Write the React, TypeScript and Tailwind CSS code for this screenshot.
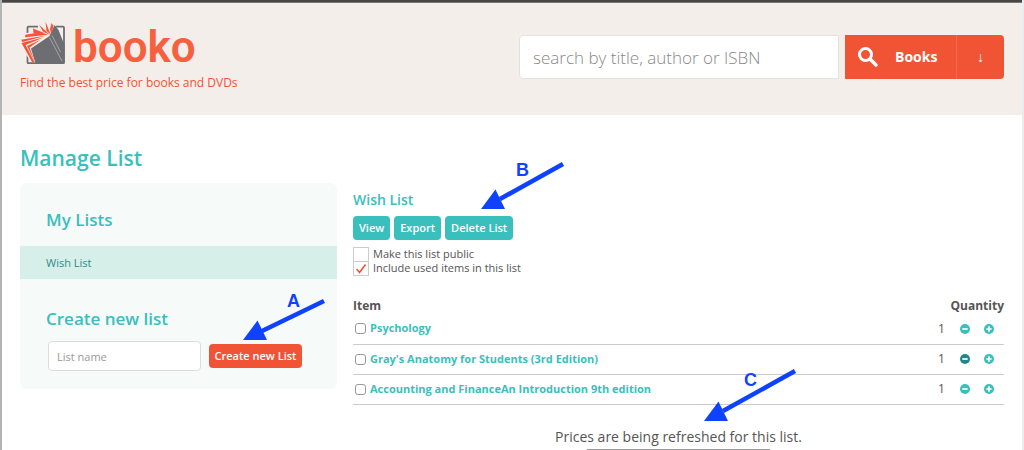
import React, { FC, ReactNode, useState } from "react";
import clsx from "clsx";

interface Book {
  title: string
  quantity: number
  hovered?: boolean
}

const books: Book[] = [
  { title: "Psychology", quantity: 1 },
  { title: "Gray's Anatomy for Students (3rd Edition)", quantity: 1, hovered: true },
  { title: "Accounting and FinanceAn Introduction 9th edition", quantity: 1 },
]

const Logo: FC = () => (
  <svg viewBox="0 0 46 46" className="h-[46px] w-[46px]" aria-hidden="true">
    <rect x="7.500" y="7.700" width="36.500" height="36.500" rx="1" fill="none" stroke="#6d6e71" strokeWidth="1.800" />
    {/* gap around the open pages */}
    <path d="M0 19 L5 14.500 L9 13.500 L12 9 L18 9 V5 H37 L30 18 L12 31 L16.500 43 H11 L5 34 Z" fill="#f3eee9" />
    <path d="M34.500 6 L38.500 11 L44.500 26 V44.500 H15.500 L11 29.500 L29.500 17 Z" fill="#6d6e71" />
    <path d="M29.500 18.500 L42 42 M32 16.500 L40.500 33" stroke="#c9c6c4" strokeWidth=".6" fill="none" />
    {/* pages */}
    <g fill="#f4553a">
      <path d="M13 9.500 L25.500 14.500 L13.500 14 Z" />
      <path d="M19 5.500 L30 16 L23 12.500 Z" />
      <path d="M25.500 2.500 L30.500 15.500 L26.500 12 Z" />
      <path d="M31.500 4 L33.500 7 L31 15.500 L30 10 Z" />
      <path d="M5.500 15.700 L20 13.300 L28 15.800 L5 18.200 Z" />
      <path d="M1 20.700 L27.500 16.300 L2.500 23 Z" />
      <path d="M1.500 24 L24 18.300 L5.500 26 L14.500 43 L12 43 Z" />
      <path d="M7 27 L21 20.500 L9.500 28.500 L15 43 Z" />
    </g>
  </svg>
)

interface MarkerProps {
  letter: string
  className: string
}

const Marker: FC<MarkerProps> = ({ letter, className }) => (
  <div className={clsx("pointer-events-none absolute h-[50px] w-[92px]", className)}>
    <svg viewBox="0 0 92 50" className="h-full w-full overflow-visible" fill="#0f42ff" stroke="#0f42ff" aria-hidden="true">
      {letter === "A" ? (
        <path d="M19 36 L81 6" strokeWidth="4.500" />
      ) : letter === "B" ? (
        <path d="M19 35 L82 0" strokeWidth="4.500" />
      ) : (
        <path d="M19 35 L91 -5" strokeWidth="4.500" />
      )}
      <path d="M0 45 L14.500 25.500 L24 45 Z" stroke="none" />
    </svg>
  </div>
)

const Letter: FC<{ children: ReactNode, className: string }> = ({ children, className }) => (
  <span className={clsx("pointer-events-none absolute font-['Liberation_Sans',sans-serif] text-[18px] leading-5 font-bold text-[#0f42ff]", className)}>
    {children}
  </span>
)

const RoundButton: FC<{ plus?: boolean, dark?: boolean, label: string }> = ({ plus, dark, label }) => (
  <button type="button" aria-label={label} className={clsx("block h-2.5 w-2.5 cursor-pointer", dark ? "text-[#22878a]" : "text-[#39bfbc]")}>
    <svg viewBox="0 0 10 10" className="h-2.5 w-2.5">
      <circle cx="5" cy="5" r="5" fill="currentColor" />
      <path d={plus ? "M2.300 5 H7.700 M5 2.300 V7.700" : "M2.300 5 H7.700"} stroke="#fff" strokeWidth="1.700" />
    </svg>
  </button>
)

const Header: FC = () => (
  <header className="flex h-28 items-start justify-between bg-[#f3eee9] px-[18px]">
    <div className="pt-4">
      <a href="#" className="flex h-12 items-start gap-[7px]">
        <Logo />
        <span className="font-['Roboto',sans-serif] text-[44px] leading-[56px] font-semibold text-[#f7603f]">booko</span>
      </a>
      <p className="mt-1.5 text-xs leading-5 text-[#f15234]">Find the best price for books and DVDs</p>
    </div>
    <form className="flex items-center gap-1.5 pt-8" onSubmit={(e) => e.preventDefault()}>
      <input
        type="text"
        aria-label="Search"
        placeholder="search by title, author or ISBN"
        className="h-11 w-80 rounded-l border border-[#e6e1dd] bg-white px-[13px] text-[17px] text-[#555] outline-none placeholder:font-light placeholder:text-[#888]"
      />
      <div className="flex h-11 w-[159px] text-white">
        <button type="submit" className="flex flex-1 items-center gap-4 bg-[#f15335] pl-3 text-sm font-bold">
          <svg viewBox="0 0 22 22" className="h-[22px] w-[22px]" fill="none" stroke="#fff" aria-hidden="true">
            <circle cx="8.500" cy="8.500" r="6" strokeWidth="3" />
            <path d="M13 13 L19 19" strokeWidth="3.500" strokeLinecap="round" />
          </svg>
          Books
        </button>
        <button type="button" aria-label="Choose category" className="w-12 rounded-r border-l border-[#f3694f] bg-[#f15335] text-sm font-bold">
          ↓
        </button>
      </div>
    </form>
  </header>
)

const Sidebar: FC = () => (
  <aside className="w-[317px] shrink-0 rounded-md bg-[#f6fbfa] pb-[18px]">
    <h2 className="px-[26px] pt-[25px] pb-3.5 text-[17px] leading-6 font-semibold text-[#39bfbc]">My Lists</h2>
    <a href="#" className="block bg-[#d6efe8] px-[26px] text-[11px] leading-[33px] text-[#2b8c8a]">Wish List</a>
    <h2 className="px-[26px] pt-7 text-[17px] leading-6 font-semibold text-[#39bfbc]">Create new list</h2>
    <form className="relative flex items-center gap-2 px-7 pt-2.5" onSubmit={(e) => e.preventDefault()}>
      <input
        type="text"
        aria-label="List name"
        placeholder="List name"
        className="h-[30px] w-[153px] rounded border border-[#ddd] bg-white px-2 text-[11px] outline-none placeholder:text-[#999]"
      />
      <button type="submit" className="h-6 w-[93px] rounded bg-[#f15335] text-[11px] font-semibold whitespace-nowrap text-white">Create new List</button>
      <Marker letter="A" className="-top-9 left-[223px]" />
      <Letter className="-top-10 left-[267px]">A</Letter>
    </form>
  </aside>
)

interface OptionProps {
  label: string
  checked: boolean
  onToggle: () => void
}

const Option: FC<OptionProps> = ({ label, checked, onToggle }) => (
  <label className="flex h-3.5 items-center gap-1 text-[11px]">
    <span className="relative h-[15px] w-4 shrink-0">
      <input type="checkbox" checked={checked} onChange={onToggle} className="block h-[15px] w-4 appearance-none border border-[#ccc] bg-white" />
      {checked && (
        <svg viewBox="0 0 16 15" className="pointer-events-none absolute inset-0 h-[15px] w-4" fill="none" aria-hidden="true">
          <path d="M3.500 8 L6.500 11.500 L12.500 3.500" stroke="#f15335" strokeWidth="1.500" />
        </svg>
      )}
    </span>
    {label}
  </label>
)

const WishList: FC = () => {
  const [isPublic, setIsPublic] = useState<boolean>(false)
  const [includeUsed, setIncludeUsed] = useState<boolean>(true)

  return (
    <section className="min-w-0 flex-1 pt-1.5">
      <h2 className="text-sm leading-[22px] font-semibold text-[#39bfbc]">Wish List</h2>
      <div className="relative mt-[5px] flex gap-1">
        {["View", "Export", "Delete List"].map((name) => (
          <button key={name} type="button" className="h-6 rounded bg-[#39bfbc] px-1.5 text-[11px] font-semibold text-white">
            {name}
          </button>
        ))}
        <Marker letter="B" className="-top-[52px] left-32" />
        <Letter className="-top-14 left-[163px]">B</Letter>
      </div>
      <div className="mt-[7px]">
        <Option label="Make this list public" checked={isPublic} onToggle={() => setIsPublic(!isPublic)} />
        <Option label="Include used items in this list" checked={includeUsed} onToggle={() => setIncludeUsed(!includeUsed)} />
      </div>

      <table className="mt-[23px] w-full border-collapse text-xs">
        <thead>
          <tr>
            <th className="p-0 text-left leading-4 font-bold">Item</th>
            <th colSpan={3} className="p-0 text-right leading-4 font-bold">Quantity</th>
          </tr>
        </thead>
        <tbody>
          {books.map((book) => (
            <tr key={book.title} className="h-[30px] border-b border-[#ccc]">
              <td className="p-0">
                <div className="flex items-center gap-1 pl-0.5">
                  <input
                    type="checkbox"
                    aria-label={`Select ${book.title}`}
                    className="h-[11px] w-[11px] appearance-none rounded-[3px] border border-[#999] bg-white"
                  />
                  <a href="#" className="text-[11px] font-bold text-[#39bfbc]">{book.title}</a>
                </div>
              </td>
              <td className="w-[22px] p-0">{book.quantity}</td>
              <td className="w-6 p-0"><RoundButton dark={book.hovered} label={`Remove one ${book.title}`} /></td>
              <td className="w-5 p-0"><RoundButton plus label={`Add one ${book.title}`} /></td>
            </tr>
          ))}
        </tbody>
      </table>

      <div className="relative mx-auto mt-5 w-fit">
        <p className="text-sm leading-[24px]">Prices are being refreshed for this list.</p>
        <div className="mx-auto h-4 w-[183px] border border-[#999]"></div>
        <Marker letter="C" className="-top-[49px] left-[149px]" />
        <Letter className="-top-[55px] left-[189px]">C</Letter>
      </div>
    </section>
  )
}

const App: FC = () => {
  return (
    <div className="h-screen overflow-hidden bg-white font-['Open_Sans',sans-serif] text-[#555]">
      <div className="flex min-h-full border-l-2 border-[#b3b3b3]">
        <div className="min-w-0 flex-1 border-r-2 border-[#ececec]">
          <div className="h-[3px] border-b border-[#777] bg-[#484644]"></div>
          <Header />
          <main className="px-[18px] pt-7">
            <h1 className="text-[21px] leading-[30px] font-semibold text-[#39bfbc]">Manage List</h1>
            <div className="mt-2.5 flex items-start gap-4">
              <Sidebar />
              <WishList />
            </div>
          </main>
        </div>
      </div>
    </div>
  );
};

export default App;
